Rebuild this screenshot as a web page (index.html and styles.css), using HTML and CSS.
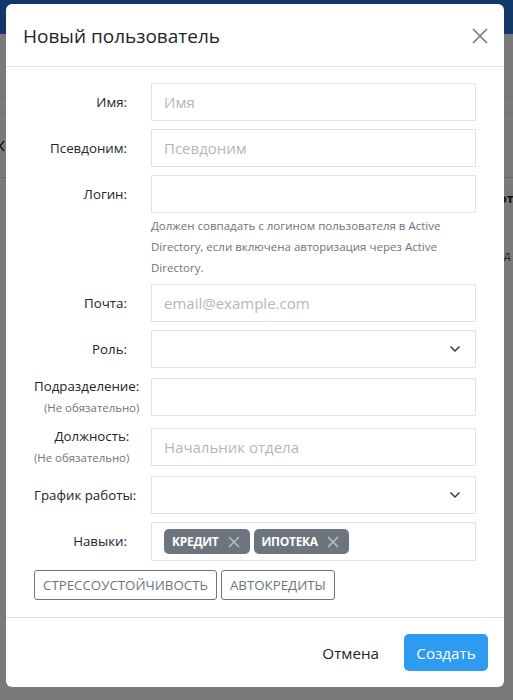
FILE: index.html
```html
<!DOCTYPE html>
<html lang="ru">
<head>
<meta charset="utf-8">
<title>Новый пользователь</title>
<link rel="stylesheet" href="styles.css">
</head>
<body>
<div class="page">
  <header class="topbar"></header>
  <div class="toolbar"></div>
  <div class="strip"></div>
  <div class="list-row">
    <svg class="back" width="6" height="12" viewBox="0 0 6 12"><path d="M5 1 L1 6 L5 11" fill="none" stroke="#222" stroke-width="1.3"/></svg>
  </div>
  <div class="side">
    <div class="side-title">от</div>
    <div class="side-text">е д</div>
  </div>
</div>
<div class="backdrop"></div>

<div class="modal" role="dialog">
  <div class="modal-header">
    <h5 class="modal-title">Новый пользователь</h5>
    <button class="close" type="button" aria-label="Закрыть">
      <svg width="16" height="16" viewBox="0 0 16 16"><path d="M1 1 L15 15 M15 1 L1 15" stroke="#6f7478" stroke-width="1.5" fill="none"/></svg>
    </button>
  </div>

  <div class="modal-body">
    <div class="row">
      <div class="label-col"><label class="lbl">Имя:</label></div>
      <input class="field" type="text" placeholder="Имя">
    </div>
    <div class="row">
      <div class="label-col"><label class="lbl">Псевдоним:</label></div>
      <input class="field" type="text" placeholder="Псевдоним">
    </div>
    <div class="row">
      <div class="label-col"><label class="lbl">Логин:</label></div>
      <input class="field" type="text">
      <p class="help">Должен совпадать с логином пользователя в Active Directory, если включена авторизация через Active Directory.</p>
    </div>
    <div class="row">
      <div class="label-col"><label class="lbl">Почта:</label></div>
      <input class="field" type="text" placeholder="email@example.com">
    </div>
    <div class="row">
      <div class="label-col"><label class="lbl">Роль:</label></div>
      <div class="field select"><span class="chev"><svg width="12" height="8" viewBox="0 0 12 8"><path d="M1.5 1.5 L6 6 L10.5 1.5" fill="none" stroke="#343a40" stroke-width="1.5"/></svg></span></div>
    </div>
    <div class="row">
      <div class="label-col"><label class="lbl">Подразделение:<span class="opt">(Не обязательно)</span></label></div>
      <input class="field" type="text">
    </div>
    <div class="row">
      <div class="label-col"><label class="lbl">Должность:<span class="opt">(Не обязательно)</span></label></div>
      <input class="field" type="text" placeholder="Начальник отдела">
    </div>
    <div class="row">
      <div class="label-col"><label class="lbl">График работы:</label></div>
      <div class="field select"><span class="chev"><svg width="12" height="8" viewBox="0 0 12 8"><path d="M1.5 1.5 L6 6 L10.5 1.5" fill="none" stroke="#343a40" stroke-width="1.5"/></svg></span></div>
    </div>
    <div class="row">
      <div class="label-col"><label class="lbl">Навыки:</label></div>
      <div class="field tags">
        <span class="chip">КРЕДИТ<svg class="x" width="12" height="12" viewBox="0 0 12 12"><path d="M1 1 L11 11 M11 1 L1 11" stroke="#c3c7cb" stroke-width="1.3"/></svg></span>
        <span class="chip">ИПОТЕКА<svg class="x" width="12" height="12" viewBox="0 0 12 12"><path d="M1 1 L11 11 M11 1 L1 11" stroke="#c3c7cb" stroke-width="1.3"/></svg></span>
      </div>
    </div>
    <div class="suggest">
      <button class="tag-btn" type="button">Стрессоустойчивость</button>
      <button class="tag-btn" type="button">Автокредиты</button>
    </div>
  </div>

  <div class="modal-footer">
    <button class="btn btn-link" type="button">Отмена</button>
    <button class="btn btn-primary" type="button">Создать</button>
  </div>
</div>
</body>
</html>
```

FILE: styles.css
```css
* { box-sizing: border-box; }

html, body {
  margin: 0;
  height: 100%;
}

body {
  font-family: "Open Sans", "Noto Sans", sans-serif;
  color: #212529;
  background: #fff;
  overflow: hidden;
}

/* page behind the dialog */
.page {
  position: relative;
  height: 700px;
}
.topbar {
  height: 34px;
  background: #2874dc;
}
.toolbar {
  height: 64px;
  border-bottom: 1px solid #ececec;
}
.strip {
  height: 16px;
  border-bottom: 1px solid #ececec;
}
.list-row {
  height: 64px;
  border-bottom: 1px solid #dcdcdc;
  display: flex;
  align-items: center;
}
.back { display: block; margin-left: -1px; }
.side {
  margin-left: 499px;
  padding-top: 12px;
  font-size: 12.5px;
  line-height: 18px;
  white-space: nowrap;
}
.side-title { font-weight: 700; color: #222; }
.side-text {
  margin-top: 38px;
  margin-left: -2px;
  font-size: 11px;
  word-spacing: -2px;
  color: #444;
}

.backdrop {
  position: fixed;
  inset: 0;
  background: rgba(0, 0, 0, .52);
}

/* dialog */
.modal {
  position: fixed;
  left: 6px;
  top: 4px;
  width: 498px;
  background: #fff;
  border-radius: 6px;
}

.modal-header {
  display: flex;
  align-items: center;
  justify-content: space-between;
  padding: 17px 16px 15px 17px;
  border-bottom: 1px solid #e3e3e3;
}
.modal-title {
  margin: 0;
  font-size: 19px;
  font-weight: 400;
  line-height: 30px;
  color: #212529;
}
.close {
  border: 0;
  background: none;
  padding: 0;
  width: 16px;
  height: 16px;
  display: block;
  cursor: pointer;
}
.close svg { display: block; }

.modal-body {
  padding: 16px 28px 17px 28px;
}

.row {
  display: grid;
  grid-template-columns: 93px 325px;
  column-gap: 24px;
  align-items: center;
  margin-bottom: 8px;
}
.label-col {
  text-align: right;
  font-size: 13.3px;
  line-height: 21px;
}
.lbl {
  display: inline-block;
  text-align: right;
  white-space: nowrap;
  color: #212529;
}
.opt {
  display: block;
  font-size: 11.4px;
  line-height: 21px;
  color: #6c757d;
}

.field {
  display: block;
  width: 325px;
  height: 38px;
  margin: 0;
  border: 1px solid #e2e2e2;
  border-radius: 1px;
  padding: 0 12px;
  font-family: inherit;
  font-size: 15px;
  color: #212529;
  background: #fff;
  outline: none;
}
.field::placeholder { color: #b3b7bb; }

.select {
  display: flex;
  align-items: center;
  justify-content: flex-end;
  padding-right: 14px;
}
.chev svg { display: block; }

.help {
  grid-column: 2;
  margin: 2px 0 -2px;
  font-size: 11.5px;
  line-height: 21px;
  color: #6c757d;
}

.tags {
  height: 39px;
  display: flex;
  align-items: center;
  gap: 4px;
}
.chip {
  display: inline-flex;
  align-items: center;
  gap: 9px;
  height: 25px;
  padding: 0 10px 0 8px;
  border-radius: 5px;
  background: #6c757d;
  color: #fff;
  font-size: 12px;
  font-weight: 700;
  letter-spacing: -0.3px;
}
.chip .x { display: block; }

.suggest {
  display: flex;
  gap: 4px;
  margin-top: 9px;
}
.tag-btn {
  height: 30px;
  padding: 0 8px;
  border: 1px solid #6c757d;
  border-radius: 3px;
  background: #fff;
  color: #6c757d;
  font-family: inherit;
  font-size: 13.3px;
  text-transform: uppercase;
}

.modal-footer {
  display: flex;
  justify-content: flex-end;
  align-items: center;
  gap: 13px;
  padding: 16px;
  border-top: 1px solid #e3e3e3;
}
.btn {
  height: 37px;
  border: 0;
  border-radius: 5px;
  font-family: inherit;
  font-size: 15.2px;
  padding: 0 12px;
}
.btn-link {
  background: none;
  color: #212529;
}
.btn-primary {
  background: #2d9bf0;
  color: #fff;
  width: 84px;
}
```
